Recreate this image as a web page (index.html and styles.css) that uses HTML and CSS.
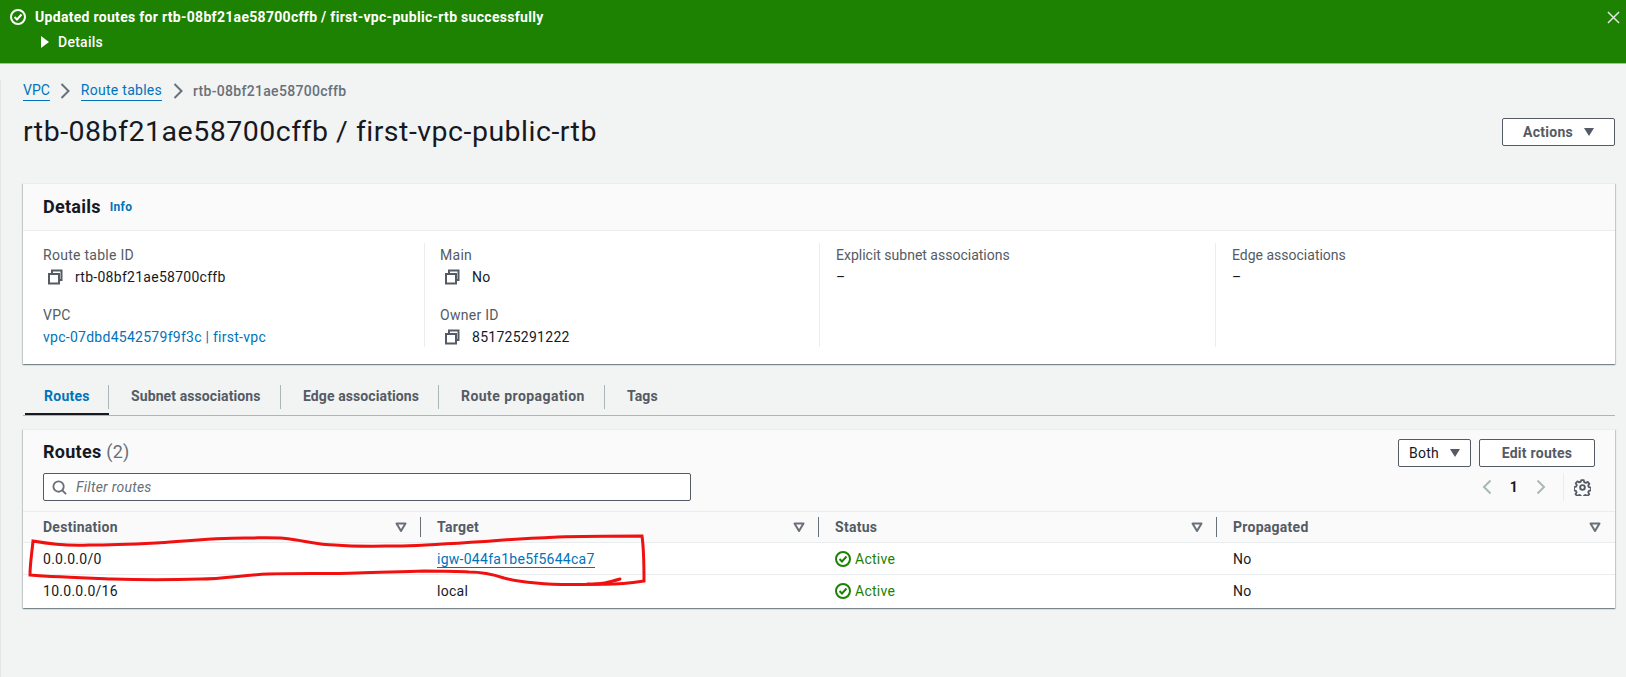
FILE: index.html
```html
<!DOCTYPE html>
<html lang="en">
<head>
<meta charset="utf-8">
<title>rtb-08bf21ae58700cffb</title>
<link rel="stylesheet" href="styles.css">
</head>
<body>
<svg width="0" height="0" class="defs">
  <defs>
    <symbol id="copy" viewBox="0 0 16 16"><path d="M5 5h7v9.500H2V5H5zM5 5V1.500h9.500V11H12" fill="none" stroke="currentColor" stroke-width="2"/></symbol>
    <symbol id="sort" viewBox="0 0 12 12"><path d="M1.500 2.500h9L6 10z" fill="none" stroke="currentColor" stroke-width="2" stroke-linejoin="round"/></symbol>
    <symbol id="ok" viewBox="0 0 16 16"><circle cx="8" cy="8" r="7" fill="none" stroke="currentColor" stroke-width="2"/><path d="M4.500 8l2.500 2.500 4.500-5" fill="none" stroke="currentColor" stroke-width="2"/></symbol>
  </defs>
</svg>
<header class="flash">
  <div class="flash-head">
    <svg class="flash-icon"><use href="#ok"/></svg>
    <span class="flash-msg">Updated routes for rtb-08bf21ae58700cffb / first-vpc-public-rtb successfully</span>
    <svg class="flash-close" viewBox="0 0 14 14"><path d="M1 1l12 12M13 1L1 13" fill="none" stroke="currentColor" stroke-width="1.600"/></svg>
  </div>
  <div class="flash-details"><span class="caret-right"></span>Details</div>
</header>
<main class="page">
  <nav class="crumbs">
    <a class="link tight">VPC</a>
    <svg class="crumb-sep" viewBox="0 0 10 16"><path d="M1.500 1l7 7-7 7" fill="none" stroke="currentColor" stroke-width="2"/></svg>
    <a class="link">Route tables</a>
    <svg class="crumb-sep" viewBox="0 0 10 16"><path d="M1.500 1l7 7-7 7" fill="none" stroke="currentColor" stroke-width="2"/></svg>
    <span class="crumb-current">rtb-08bf21ae58700cffb</span>
  </nav>
  <div class="title-row">
    <h1 class="title">rtb-08bf21ae58700cffb / first-vpc-public-rtb</h1>
    <button class="btn btn-actions">Actions<span class="caret-down"></span></button>
  </div>
  <section class="card details">
    <div class="details-head"><h2 class="card-title">Details</h2><a class="info">Info</a></div>
    <div class="details-grid">
      <div class="col">
        <div class="label">Route table ID</div>
        <div class="value"><svg class="copy"><use href="#copy"/></svg>rtb-08bf21ae58700cffb</div>
        <div class="label second">VPC</div>
        <div class="value"><a class="plain-link">vpc-07dbd4542579f9f3c | first-vpc</a></div>
      </div>
      <div class="col">
        <div class="label">Main</div>
        <div class="value"><svg class="copy"><use href="#copy"/></svg>No</div>
        <div class="label second">Owner ID</div>
        <div class="value"><svg class="copy"><use href="#copy"/></svg>851725291222</div>
      </div>
      <div class="col col-wide">
        <div class="label tight">Explicit subnet associations</div>
        <div class="value">–</div>
      </div>
      <div class="col col-wide">
        <div class="label tight">Edge associations</div>
        <div class="value">–</div>
      </div>
    </div>
  </section>
  <div class="tabs">
    <div class="tab tab-active">Routes</div>
    <div class="tab">Subnet associations</div>
    <div class="tab">Edge associations</div>
    <div class="tab tab-wide">Route propagation</div>
    <div class="tab tab-last">Tags</div>
  </div>
  <section class="card routes">
    <div class="routes-head">
      <div class="routes-left">
        <h2 class="card-title">Routes <span class="count">(2)</span></h2>
        <div class="filter">
          <svg class="search" viewBox="0 0 16 16"><circle cx="7" cy="7" r="5.500" fill="none" stroke="currentColor" stroke-width="2"/><path d="M11 11l4 4" fill="none" stroke="currentColor" stroke-width="2"/></svg>
          <span class="placeholder">Filter routes</span>
        </div>
      </div>
      <div class="routes-right">
        <div class="route-actions">
          <button class="btn btn-both">Both<span class="caret-down"></span></button>
          <button class="btn btn-edit">Edit routes</button>
        </div>
        <div class="pager">
          <svg class="pager-arrow" viewBox="0 0 10 16"><path d="M8.500 1.500L2 8l6.500 6.500" fill="none" stroke="currentColor" stroke-width="2"/></svg>
          <span class="page-num">1</span>
          <svg class="pager-arrow" viewBox="0 0 10 16"><path d="M1.500 1.500L8 8l-6.500 6.500" fill="none" stroke="currentColor" stroke-width="2"/></svg>
          <span class="pager-div"></span>
          <svg class="gear" viewBox="0 0 16 16"><circle cx="8" cy="8" r="2.200" fill="none" stroke="currentColor" stroke-width="1.800"/><path d="M6.800 1h2.400l.4 2 1.500.7 1.800-1 1.600 1.800-1.100 1.700.6 1.500 2 .5v2.400l-2 .5-.6 1.500 1 1.700-1.700 1.700-1.700-1-1.500.6-.5 2H6.800l-.5-2-1.500-.6-1.700 1-1.700-1.700 1-1.700-.6-1.500-1.800-.5V7.700l2-.5.6-1.500-1-1.700 1.600-1.800 1.700 1 1.500-.7z" fill="none" stroke="currentColor" stroke-width="1.700" stroke-linejoin="round"/></svg>
        </div>
      </div>
    </div>
    <table class="table">
      <thead>
        <tr>
          <th><div class="th-in th-first"><span>Destination</span><svg class="sort"><use href="#sort"/></svg></div></th>
          <th><div class="th-in"><span>Target</span><svg class="sort"><use href="#sort"/></svg></div></th>
          <th><div class="th-in"><span>Status</span><svg class="sort"><use href="#sort"/></svg></div></th>
          <th><div class="th-in th-last"><span>Propagated</span><svg class="sort"><use href="#sort"/></svg></div></th>
        </tr>
      </thead>
      <tbody>
        <tr>
          <td class="td-first">0.0.0.0/0</td>
          <td><a class="link">igw-044fa1be5f5644ca7</a></td>
          <td><span class="status"><svg class="status-icon"><use href="#ok"/></svg>Active</span></td>
          <td>No</td>
        </tr>
        <tr>
          <td class="td-first">10.0.0.0/16</td>
          <td>local</td>
          <td><span class="status"><svg class="status-icon"><use href="#ok"/></svg>Active</span></td>
          <td>No</td>
        </tr>
      </tbody>
    </table>
  </section>
</main>
<svg class="scribble" viewBox="0 0 1626 677" fill="none">
  <path d="M33 541C50 544 70 546 89 545C112 545 135 544 156 543C185 541 215 538 245 538C262 538 278 537 290 539C305 541 320 545 335 545C358 547 380 546 402 546C430 545 460 543 491 541C515 539 535 538 558 537C585 536 615 536 642 536C644 550 644 566 644 581C630 583 615 585 598 584C575 585 555 585 536 583C525 582 515 581 504 578C492 574 482 572 469 572C455 571 440 571 424 571C400 572 380 572 357 573C328 574 298 573 268 574C245 575 222 579 201 579C170 580 140 580 112 579C85 578 55 577 30 575C30 564 32 552 33 541Z" stroke="#f01010" stroke-width="3"/>
  <path d="M588 584C600 585 610 582 620 579" stroke="#f01010" stroke-width="3" stroke-linecap="round"/>
</svg>
</body>
</html>
```
FILE: styles.css
```css
* { box-sizing: border-box; }
html, body { margin: 0; padding: 0; }
body {
  width: 1626px;
  height: 677px;
  overflow: hidden;
  position: relative;
  background: #f2f3f3;
  color: #16191f;
  font-family: "Roboto", "Liberation Sans", sans-serif;
  font-size: 14px;
  line-height: 22px;
  letter-spacing: .27px;
}
.tight { letter-spacing: 0; }
.defs { position: absolute; }
.flash {
  height: 64px;
  background: #1d8102;
  border-bottom: 1px solid #aab7b8;
  color: #fff;
  padding: 6px 6px 0 10px;
}
.flash-head { display: flex; align-items: center; height: 22px; }
.flash-icon { width: 16px; height: 16px; margin-right: 9px; color: #fff; flex: none; }
.flash-msg { font-weight: 700; flex: 1; letter-spacing: .3px; }
.flash-close { width: 13px; height: 13px; color: #e6e6e6; }
.flash-details { display: flex; align-items: center; margin: 3px 0 0 31px; height: 22px; font-weight: 500; }
.caret-right {
  width: 0; height: 0; margin-right: 9px;
  border-left: 8px solid #fff;
  border-top: 6px solid transparent;
  border-bottom: 6px solid transparent;
}
.page {
  height: 613px;
  padding: 0 11px 0 22px;
  border-left: 1px solid #e4e6e6;
}
.crumbs { display: flex; align-items: center; height: 22px; margin-top: 16px; }
.link { color: #0073bb; border-bottom: 1px solid #0073bb; line-height: 19px; }
.crumb-sep { width: 10px; height: 16px; margin: 0 10.500px; color: #687078; }
.crumb-current { color: #687078; font-weight: 500; letter-spacing: .3px; }
.title-row { display: flex; justify-content: space-between; align-items: flex-start; height: 38px; margin-top: 11px; }
.title { margin: 0; font-size: 28.500px; font-weight: 400; line-height: 38px; letter-spacing: .5px; }
.btn {
  background: #fff;
  border: 1px solid #545b64;
  border-radius: 2px;
  color: #545b64;
  font: 700 14px/22px "Roboto", "Liberation Sans", sans-serif;
  letter-spacing: .27px;
  padding: 0;
  height: 28px;
  display: flex; align-items: center; justify-content: center;
}
.btn-actions { width: 113px; margin-top: 5px; }
.caret-down {
  width: 0; height: 0; margin-left: 11px;
  border-top: 8px solid #545b64;
  border-left: 5.500px solid transparent;
  border-right: 5.500px solid transparent;
}
.card {
  background: #fff;
  box-shadow: 0 1px 1px 0 rgba(0,28,36,.3), 1px 1px 1px 0 rgba(0,28,36,.15), -1px 1px 1px 0 rgba(0,28,36,.15);
  border-top: 1px solid #eaeded;
}
.details { margin-top: 32px; height: 181px; }
.details-head {
  height: 47px;
  background: #fafafa;
  border-bottom: 1px solid #eaeded;
  display: flex; align-items: center; padding-left: 20px;
}
.card-title { margin: 0; font-size: 18px; font-weight: 700; line-height: 22px; }
.count { font-weight: 400; color: #687078; }
.info { color: #0073bb; font-size: 12px; font-weight: 700; margin-left: 9px; }
.details-grid { display: grid; grid-template-columns: 401px 395px 396px 1fr; padding: 12px 0 0; }
.col { height: 104px; padding: 1px 0 0 15px; border-left: 1px solid #eaeded; }
.col:first-child { padding-left: 20px; border-left: 0; }
.col-wide { padding-left: 16px; }
.label { color: #545b64; }
.label.second { margin-top: 16px; }
.value { display: flex; align-items: center; }
.copy { width: 16px; height: 16px; margin: 0 12px 0 4px; color: #545b64; flex: none; }
.plain-link { color: #0073bb; }
.tabs {
  display: grid;
  grid-template-columns: 84px 172px 158px 166px auto;
  height: 52px;
  padding: 21px 0 0 2px;
  border-bottom: 1px solid #aab7b8;
}
.tab {
  position: relative;
  padding: 0 0 0 22px;
  font-weight: 700;
  color: #545b64;
  line-height: 22px;
  border-right: 1px solid #aab7b8;
  height: 24px;
  letter-spacing: .1px;
}
.tab-wide { letter-spacing: .45px; }
.tab-active { color: #0073bb; padding-left: 19px; letter-spacing: .27px; }
.tab-active::after {
  content: "";
  position: absolute;
  left: 0; right: -1px; top: 28px;
  height: 2px;
  background: #16191f;
}
.tab-last { border-right: 0; }
.routes { margin-top: 13px; height: 179px; background: #fff; }
.routes-head {
  height: 82px;
  background: #fafafa;
  border-bottom: 1px solid #eaeded;
  display: flex; justify-content: space-between;
  padding: 0 20px 0 20px;
}
.routes-left { padding-top: 11px; }
.filter {
  width: 648px; height: 28px; margin-top: 10px;
  background: #fff;
  border: 1px solid #545b64;
  border-radius: 2px;
  display: flex; align-items: center; padding-left: 8px;
}
.search { width: 15px; height: 15px; color: #687078; margin-right: 9px; }
.placeholder { color: #687078; font-style: italic; }
.routes-right { display: flex; flex-direction: column; align-items: flex-end; padding-top: 9px; }
.route-actions { display: flex; gap: 8px; }
.btn-both { width: 73px; color: #16191f; font-weight: 400; height: 28px; }
.btn-edit { width: 116px; height: 28px; }
.pager { display: flex; align-items: center; height: 28px; margin-top: 6px; padding-right: 4px; }
.pager-arrow { width: 10px; height: 16px; color: #aab7b8; }
.page-num { width: 44px; text-align: center; font-weight: 700; }
.pager-div { width: 1px; height: 28px; background: #eaeded; margin: 0 10px 0 17px; }
.gear { width: 17px; height: 17px; color: #545b64; }
.table { width: 100%; border-collapse: collapse; table-layout: fixed; }
.table th { padding: 0; height: 30px; background: #fafafa; border-bottom: 1px solid #eaeded; text-align: left; font-weight: 700; color: #545b64; }
.th-in {
  display: flex; align-items: center; justify-content: space-between;
  height: 20px; padding: 0 13px 0 16px;
  border-right: 1px solid #687078;
}
.th-first { padding-left: 20px; }
.th-last { border-right: 0; padding-right: 14px; }
.sort { width: 12px; height: 12px; color: #687078; }
.table td { padding: 2px 0 0 16px; height: 32px; border-bottom: 1px solid #eaeded; }
.table tr:last-child td { border-bottom: 0; }
.table td.td-first { padding-left: 20px; }
.status { color: #1d8102; display: flex; align-items: center; }
.status-icon { width: 16px; height: 16px; margin-right: 4px; }
.scribble { position: absolute; left: 0; top: 0; width: 1626px; height: 677px; pointer-events: none; }
```
